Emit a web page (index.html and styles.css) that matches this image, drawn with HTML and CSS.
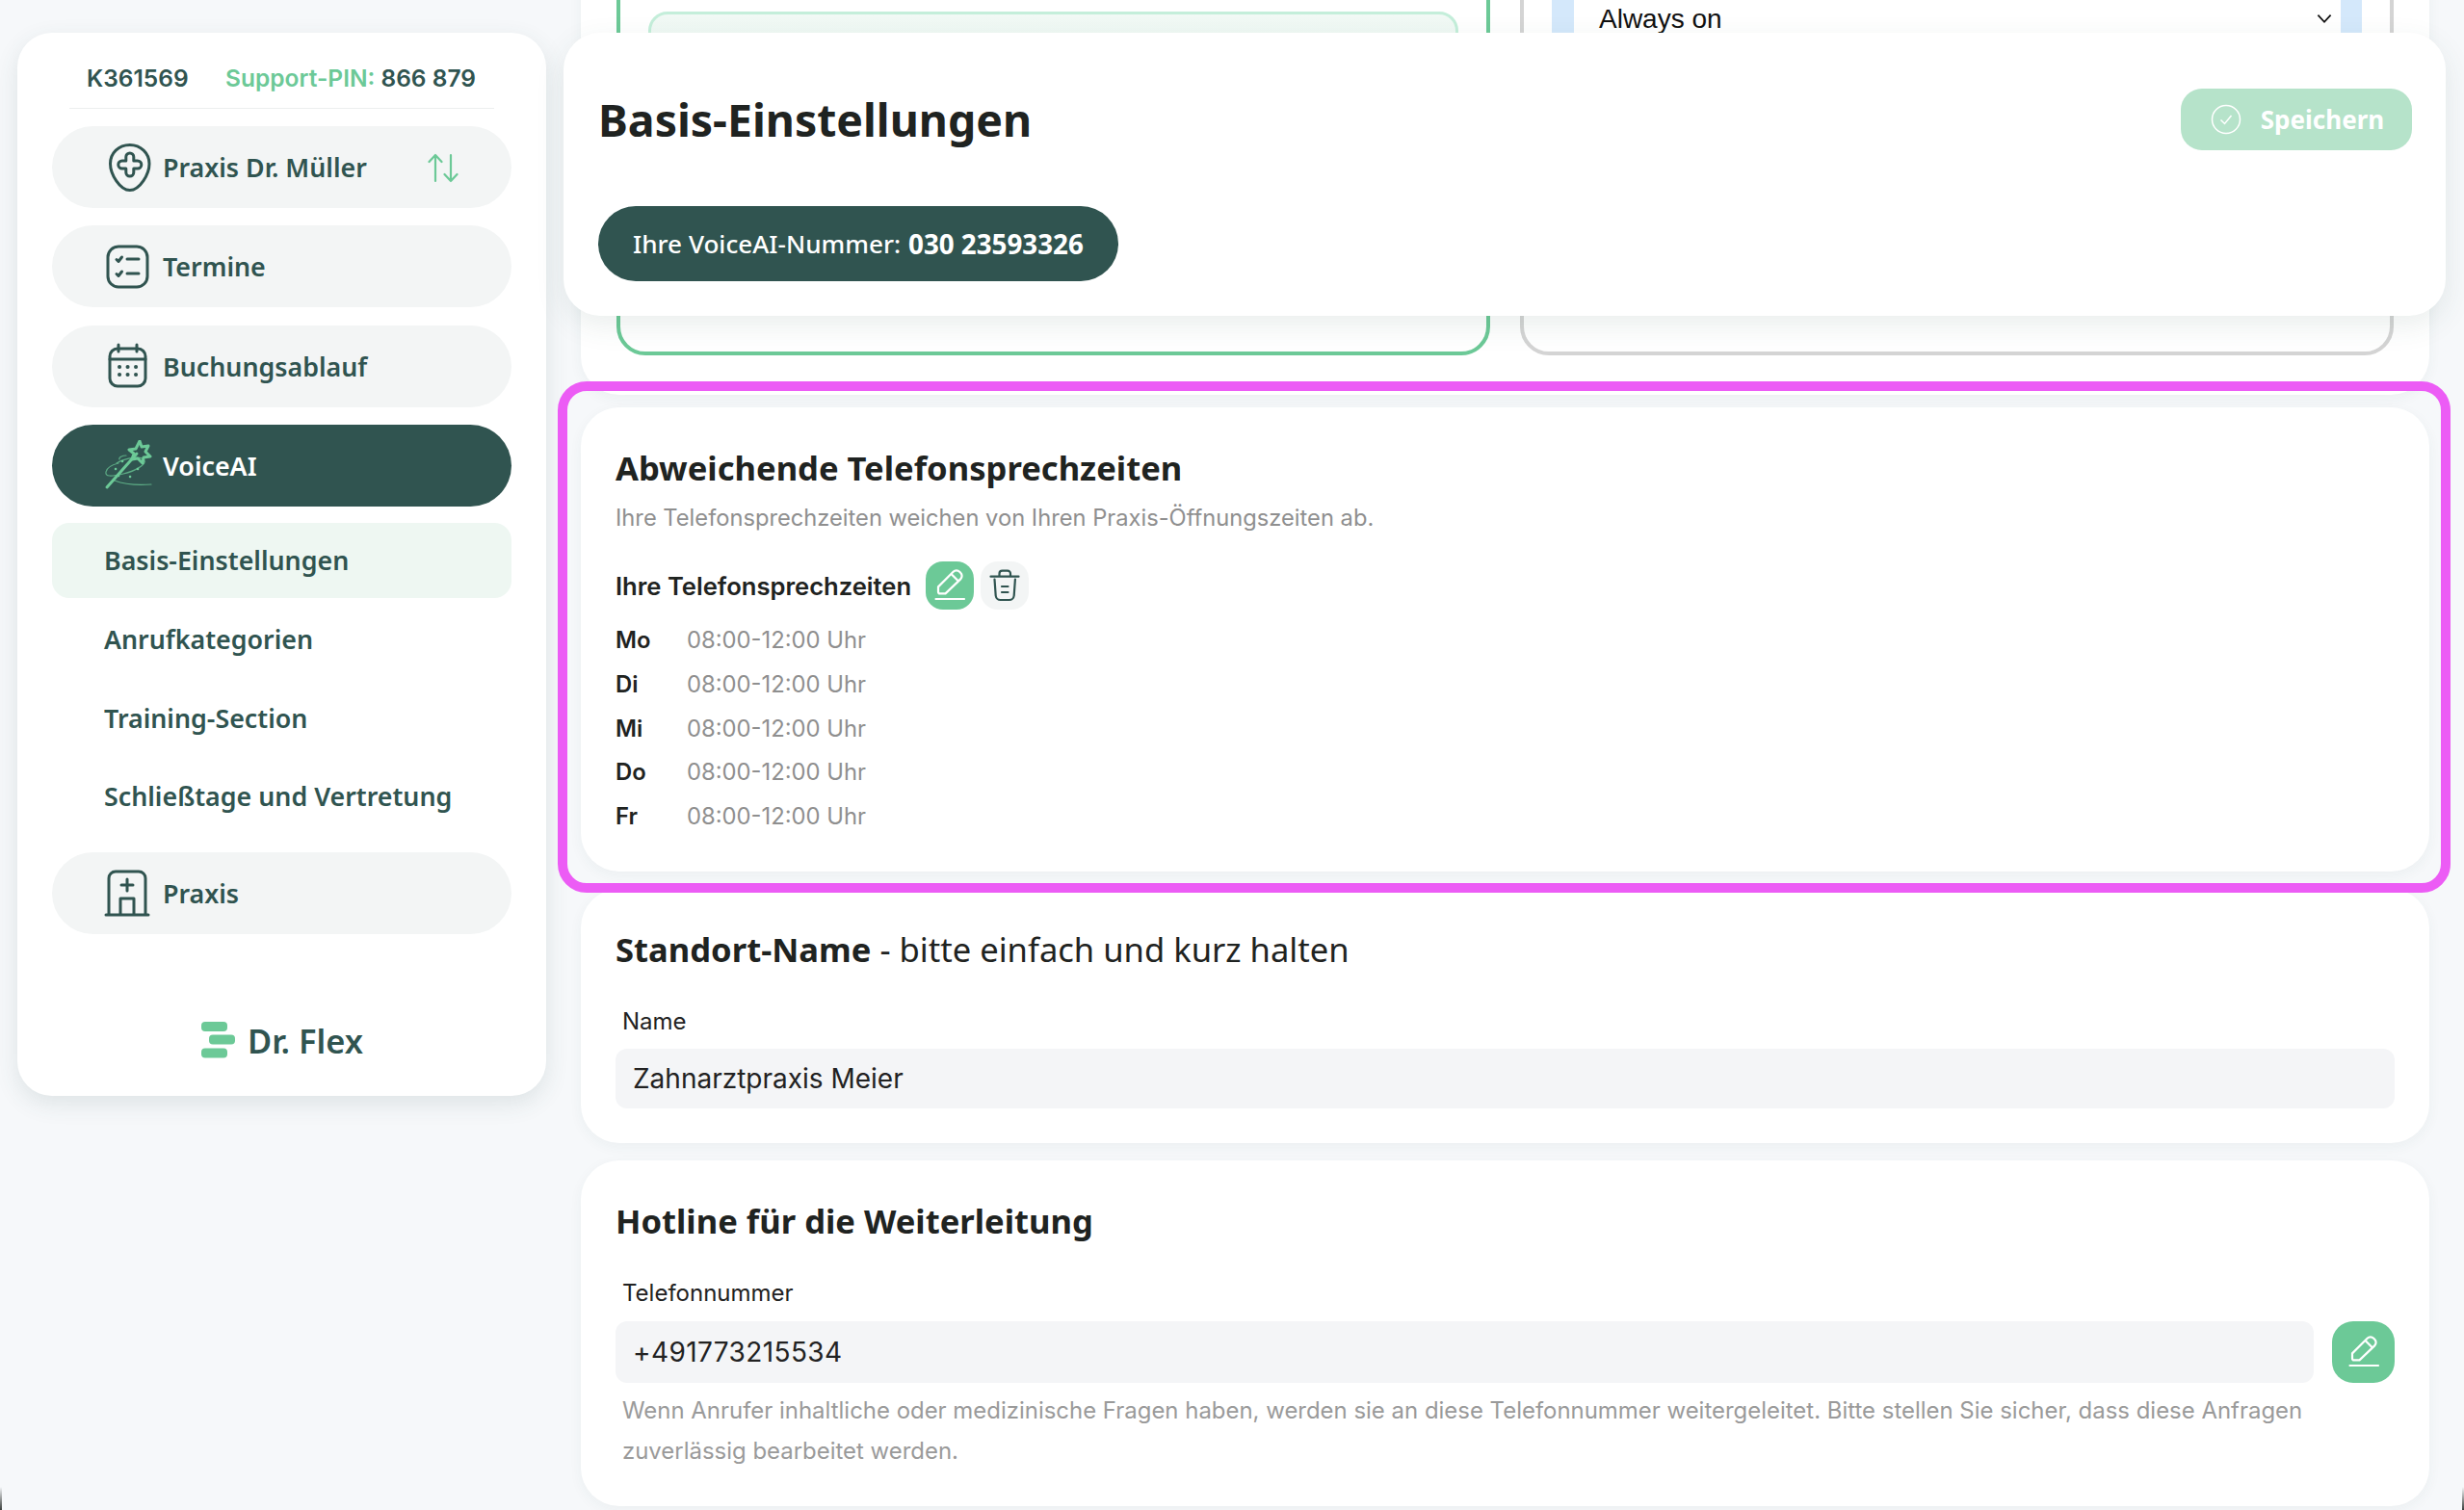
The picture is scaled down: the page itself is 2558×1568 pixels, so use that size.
FILE: index.html
```html
<!DOCTYPE html>
<html lang="de">
<head>
<meta charset="utf-8">
<title>Basis-Einstellungen</title>
<link rel="stylesheet" href="styles.css">
</head>
<body>
<div class="app">
  <aside class="sidebar">
    <div class="ids"><span class="kid">K361569</span><span class="pin"><span class="pin-label">Support-PIN:</span> 866 879</span></div>
    <nav class="nav">
      <a class="nav-item">
        <svg class="nav-icon" viewBox="0 0 52 52"><path d="M27.800 2.500C16 2.500 7.500 11 7.500 22c0 11 10 27.500 20.300 27.500S48 33 48 22C48 11 39 2.500 27.800 2.500z"/><path d="M23.800 15a4 4 0 0 1 8 0v4h4a4 4 0 0 1 0 8h-4v4a4 4 0 0 1-8 0v-4h-4a4 4 0 0 1 0-8h4z"/></svg>
        <span>Praxis Dr. Müller</span>
        <svg class="swap" viewBox="0 0 32 32"><path d="M8 30V3M1.500 10L8 3l6.500 7M24 3v27M17.500 23l6.500 7 6.500-7"/></svg>
      </a>
      <a class="nav-item">
        <svg class="nav-icon" viewBox="0 0 52 52"><rect x="5" y="5" width="41" height="42" rx="11"/><path d="M14 18.500l2 2 3.500-4.500M14 33.500l2 2 3.500-4.500M25 18h12M25 33h12"/></svg>
        <span>Termine</span>
      </a>
      <a class="nav-item">
        <svg class="nav-icon" viewBox="0 0 52 52"><rect x="7" y="8" width="37" height="39" rx="8"/><path d="M7 19h37M16 4v7M35 4v7"/><path class="dots" d="M17 27h.1M25.500 27h.1M34 27h.1M17 35h.1M25.500 35h.1M34 35h.1"/></svg>
        <span>Buchungsablauf</span>
      </a>
      <a class="nav-item nav-active">
        <svg class="nav-icon wand" viewBox="0 0 52 52"><path d="M4 49L35 14"/><path d="M38 1l2 6 7-1-3 6 5 5-7 1-1 6-5-5-6 1 2-6-5-4 7-1z"/><path class="thin" d="M14 24c10-6 26-8 29-3 2 4-9 11-22 14S2 38 3 33s9-8 13-9M24 16c-4 0-8 2-7 4M12 42c10 4 24 5 38 4"/><path class="dots-thin" d="M20 22h.1M13 30h.1M36 30h.1M28 38h.1M16 37h.1"/></svg>
        <span>VoiceAI</span>
      </a>
    </nav>
    <ul class="subnav">
      <li class="sub-active">Basis-Einstellungen</li>
      <li>Anrufkategorien</li>
      <li>Training-Section</li>
      <li>Schließtage und Vertretung</li>
    </ul>
    <a class="nav-item">
      <svg class="nav-icon" viewBox="0 0 52 52"><path d="M3 49h44M6 49V11a7 7 0 0 1 7-7h24a7 7 0 0 1 7 7v38M18 49V32h14v17M25 12v12M19 18h12"/></svg>
      <span>Praxis</span>
    </a>
    <div class="brand">
      <svg class="brand-mark" viewBox="0 0 36 38"><rect x="0" y="0" width="27" height="10" rx="4"/><rect x="8" y="13.500" width="27" height="10" rx="4"/><rect x="0" y="27.500" width="27" height="10" rx="4"/></svg>
      <span>Dr. Flex</span>
    </div>
  </aside>

  <main class="main">
    <header class="page-head">
      <div class="head-row">
        <h1>Basis-Einstellungen</h1>
        <button class="save"><svg viewBox="0 0 32 32"><circle cx="16" cy="16" r="14.500"/><path d="M10.500 16.500l4 4 7-8.500"/></svg>Speichern</button>
      </div>
      <div class="number-pill">Ihre VoiceAI-Nummer: <b>030 23593326</b></div>
    </header>

    <div class="content">
      <section class="card card-modes">
        <div class="mode mode-on"><div class="mode-inner"></div></div>
        <div class="mode mode-off">
          <div class="select"><span>Always on</span><svg viewBox="0 0 16 10"><path d="M2 1.500l6 6.500 6-6.500"/></svg></div>
        </div>
      </section>

      <div class="highlight">
        <section class="card card-hours">
          <h2>Abweichende Telefonsprechzeiten</h2>
          <p class="hint">Ihre Telefonsprechzeiten weichen von Ihren Praxis-Öffnungszeiten ab.</p>
          <div class="hours-head">
            <strong>Ihre Telefonsprechzeiten</strong>
            <button class="icon-btn edit"><svg viewBox="0 0 50 50"><path d="M28.600 10.800a4.600 4.600 0 0 1 6.600 0l1 1a4.600 4.600 0 0 1 0 6.600L20.500 33.400H15a2 2 0 0 1-2-2v-5zM26.500 13l7.500 7.500M10.500 39h29.500"/></svg></button>
            <button class="icon-btn trash"><svg viewBox="0 0 50 50"><path d="M10.500 15.700h29M19.500 15.700v-3a3 3 0 0 1 3-3h5.500a3 3 0 0 1 3 3v3M14.500 18.500l1.200 17a5 5 0 0 0 5 4.500h9a5 5 0 0 0 5-4.500l1.200-17M22 26h6.500M22 32h6.500"/></svg></button>
          </div>
          <dl class="hours">
            <div class="hour"><dt>Mo</dt><dd>08:00-12:00 Uhr</dd></div>
            <div class="hour"><dt>Di</dt><dd>08:00-12:00 Uhr</dd></div>
            <div class="hour"><dt>Mi</dt><dd>08:00-12:00 Uhr</dd></div>
            <div class="hour"><dt>Do</dt><dd>08:00-12:00 Uhr</dd></div>
            <div class="hour"><dt>Fr</dt><dd>08:00-12:00 Uhr</dd></div>
          </dl>
        </section>
      </div>

      <section class="card card-name">
        <h2>Standort-Name <span class="light">- bitte einfach und kurz halten</span></h2>
        <label class="field-label">Name</label>
        <div class="input">Zahnarztpraxis Meier</div>
      </section>

      <section class="card card-hotline">
        <h2>Hotline für die Weiterleitung</h2>
        <label class="field-label">Telefonnummer</label>
        <div class="input-row">
          <div class="input phone">+491773215534</div>
          <button class="icon-btn edit big"><svg viewBox="0 0 50 50"><path d="M28.600 10.800a4.600 4.600 0 0 1 6.600 0l1 1a4.600 4.600 0 0 1 0 6.600L20.500 33.400H15a2 2 0 0 1-2-2v-5zM26.500 13l7.500 7.500M10.500 39h29.500"/></svg></button>
        </div>
        <p class="help">Wenn Anrufer inhaltliche oder medizinische Fragen haben, werden sie an diese Telefonnummer weitergeleitet. Bitte stellen Sie sicher, dass diese Anfragen zuverlässig bearbeitet werden.</p>
      </section>
    </div>
  </main>
</div>
</body>
</html>
```
FILE: styles.css
```css
* { box-sizing: border-box; }
html, body { margin: 0; height: 100%; }
body {
  background: #f6f8fa;
  overflow: hidden;
  font-family: "Inter", "Liberation Sans", sans-serif;
  color: #1f2321;
}
body::before, body::after {
  content: "";
  position: fixed;
  z-index: 9;
  bottom: 0;
  width: 2px;
  height: 24px;
  background: linear-gradient(transparent, #3a3f3c);
}
body::before { left: 0; }
body::after { right: 0; }
.app { display: flex; height: 1568px; padding-left: 18px; overflow: hidden; }

/* Sidebar */
.sidebar {
  flex: 0 0 549px;
  height: 1104px;
  margin-top: 34px;
  padding: 0 36px;
  background: #fff;
  border-radius: 36px;
  box-shadow: 0 8px 24px rgba(48, 84, 80, .12);
  display: flex;
  flex-direction: column;
  color: #305450;
  font-family: "Noto Sans", sans-serif;
}
.ids {
  height: 79px;
  margin: 0 18px 18px;
  padding: 15px 0 0 18px;
  border-bottom: 1px solid #eceeee;
  display: flex;
  align-items: center;
  gap: 38.500px;
  font-family: "Inter", sans-serif;
  font-size: 24.500px;
  font-weight: 600;
  white-space: nowrap;
}
.pin-label { color: #6cc997; }
.nav { display: flex; flex-direction: column; gap: 18.300px; }
.nav-item {
  height: 85px;
  flex: none;
  padding-left: 53px;
  padding-right: 55px;
  display: flex;
  align-items: center;
  gap: 10px;
  border-radius: 43px;
  background: #f3f5f5;
  font-size: 26.800px;
  font-weight: 600;
}
.nav-icon { width: 52px; height: 52px; flex: none; fill: none; stroke: #305450; stroke-width: 3; stroke-linecap: round; stroke-linejoin: round; }
.nav-icon .dots { stroke-width: 4; }
.nav-active { background: #305450; color: #fff; }
.wand { stroke: #6cc997; }
.wand .thin { stroke-width: 1.200; opacity: .75; }
.wand .dots-thin { stroke-width: 2.500; }
.swap { width: 32px; height: 32px; margin-left: auto; flex: none; fill: none; stroke: #6cc997; stroke-width: 2.200; stroke-linecap: round; stroke-linejoin: round; }
.subnav { list-style: none; margin: 17px 0 0; padding: 0; display: flex; flex-direction: column; font-size: 26.800px; font-weight: 600; }
.subnav li { height: 81.600px; padding-left: 54px; display: flex; align-items: center; }
.subnav .sub-active { height: 78px; margin-bottom: 2px; background: #eef7f2; border-radius: 18px; }
.sidebar > .nav-item { margin-top: 17px; }
.brand {
  margin-top: auto;
  height: 38px;
  margin-bottom: 39px;
  margin-left: 155px;
  display: flex;
  align-items: center;
  gap: 12px;
  font-size: 34.400px;
  font-weight: 600;
}
.brand-mark { width: 36px; height: 38px; fill: #6cc997; flex: none; }

/* Main */
.main { flex: 1; min-width: 0; position: relative; padding: 0 36px; }
.page-head {
  position: absolute;
  z-index: 5;
  top: 34px;
  left: 18px;
  right: 19px;
  height: 294px;
  padding: 58px 35px 0 36px;
  background: #fff;
  border-radius: 38px;
  box-shadow: 0 10px 30px rgba(48, 84, 80, .1);
}
.head-row { display: flex; align-items: flex-start; justify-content: space-between; }
h1 { margin: 0; font: 700 46.400px/64px "Noto Sans", sans-serif; color: #1f2321; }
.save {
  width: 240px;
  height: 64px;
  border: 0;
  border-radius: 22px;
  background: #b6e3ca;
  color: #fff;
  display: flex;
  align-items: center;
  justify-content: center;
  gap: 20px;
  padding: 0 0 0 2px;
  font: 700 26px "Noto Sans", sans-serif;
}
.save svg { width: 32px; height: 32px; fill: none; stroke: #fff; stroke-width: 1.500; }
.number-pill {
  margin-top: 58px;
  width: fit-content;
  height: 78px;
  padding: 0 36px;
  display: flex;
  align-items: center;
  gap: 8px;
  border-radius: 39px;
  background: #305450;
  color: #fff;
  font: 500 26.100px "Noto Sans", sans-serif;
}
.number-pill b { font-size: 27.750px; font-weight: 700; }

.content { margin-top: -100px; display: flex; flex-direction: column; }
.card { background: #fff; border-radius: 40px; box-shadow: 0 4px 14px rgba(48, 84, 80, .05); }
.card-modes { height: 510px; padding: 30px 37px 41px; display: flex; gap: 31px; }
.mode { flex: 1; border-radius: 30px; border: 4px solid #d4d4d4; }
.mode-on { border-color: #6cc997; padding: 78px 29px 0; }
.mode-inner { height: 200px; border: 3px solid #c4eeda; border-radius: 20px; background: linear-gradient(#f1f9f5, #e3f3eb); }
.mode-off { padding: 0 29px; }
.select {
  height: 96px;
  margin-top: 36px;
  padding: 0 8px 0 26px;
  display: flex;
  align-items: flex-end;
  justify-content: space-between;
  background: #fff;
  border-left: 23px solid #d4e8fb;
  border-right: 22px solid #d4e8fb;
  font: 400 28px/36px "Liberation Sans", Arial, sans-serif;
  color: #111;
}
.select span { margin-bottom: 28px; }
.select svg { width: 18px; height: 11px; margin-bottom: 41px; fill: none; stroke: #111; stroke-width: 1.600; }

.highlight {
  position: relative;
  z-index: 1;
  margin: -14px -22px 0 -24px;
  padding: 17px 12px 12px 14px;
  border: 10px solid #ec5cf5;
  border-radius: 30px;
}
.card-hours { height: 482px; padding: 40px 36px 0; }
h2 { margin: 0; font: 700 34.600px/46px "Noto Sans", sans-serif; color: #1f2321; }
.hint { margin: 12px 0 0; font-size: 23.700px; line-height: 34px; color: #8f8f8f; }
.hours-head { margin-top: 28px; display: flex; align-items: center; gap: 7px; height: 50px; }
.hours-head strong { margin-right: 8px; font-size: 25.600px; font-weight: 600; }
.icon-btn { padding: 0; border: 0; flex: none; width: 50px; height: 50px; border-radius: 18px; display: flex; align-items: center; justify-content: center; }
.icon-btn svg { width: 50px; height: 50px; fill: none; stroke-width: 2.200; stroke-linecap: round; stroke-linejoin: round; }
.edit { background: #6cc997; }
.edit svg { stroke: #fff; }
.trash { background: #f3f5f5; }
.trash svg { stroke: #305450; }
.big { width: 65px; height: 64px; border-radius: 22px; }
.hours { margin: 9px 0 0; }
.hour { height: 45.700px; display: flex; align-items: center; font-size: 23.800px; }
.hour dt { width: 74px; font-weight: 600; }
.hour dd { margin: 0; color: #8f8f8f; }

.card-name { height: 264px; margin-top: -4px; padding: 40px 36px 0; }
.card-name h2, .card-hotline h2 { white-space: nowrap; }
.light { font-weight: 400; }
.field-label { display: block; margin: 35px 0 0 7px; font-size: 24px; line-height: 34px; color: #222; }
.input { margin-top: 11px; height: 62px; padding-left: 18px; display: flex; align-items: center; background: #f4f5f7; border-radius: 12px; font-size: 28px; color: #222; }
.card-hotline { height: 359px; margin-top: 18px; padding: 40px 36px 0; }
.input-row { margin-top: 12px; display: flex; gap: 19px; }
.phone { flex: 1; margin: 0; height: 64px; letter-spacing: .4px; }
.help { margin: 8px 0 0 7px; font-size: 23.950px; line-height: 42px; color: #9a9a9a; }
```
